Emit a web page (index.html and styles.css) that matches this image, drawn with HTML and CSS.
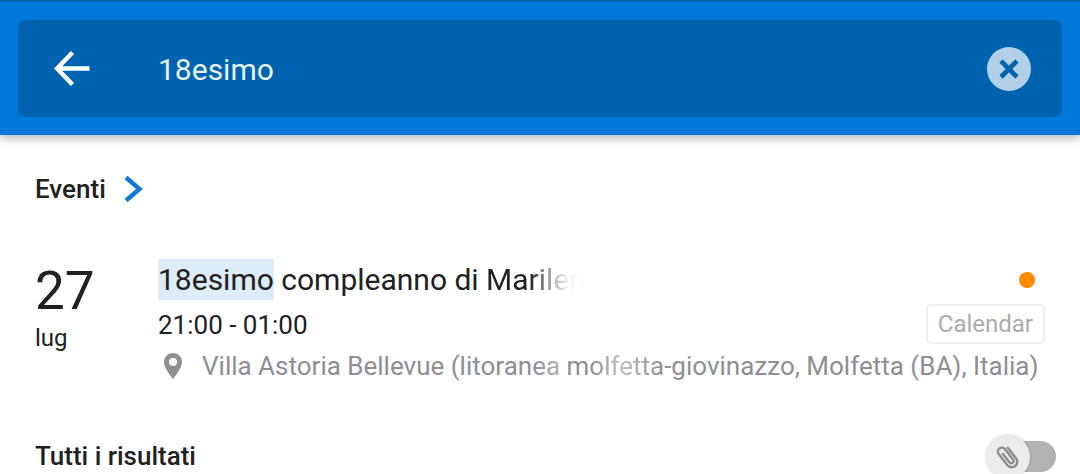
FILE: index.html
```html
<!DOCTYPE html>
<html lang="it">
<head>
<meta charset="utf-8">
<meta name="viewport" content="width=device-width, initial-scale=1">
<title>18esimo</title>
<link rel="stylesheet" href="styles.css">
</head>
<body>
<header class="app-bar">
  <form class="search" role="search">
    <button class="icon-button" type="button" aria-label="Indietro">
      <svg width="36" height="36" viewBox="0 0 36 36" fill="none" stroke="#fff" stroke-width="4.400"><path d="M35.500 17.500H4M18.500 1.500L3 17.500l15.500 16"/></svg>
    </button>
    <input class="search-input" type="text" value="18esimo" aria-label="Cerca">
    <button class="icon-button" type="button" aria-label="Cancella">
      <svg width="44" height="44" viewBox="0 0 44 44"><circle cx="22" cy="22" r="22" fill="#b2d0e8"/><path d="M14 14l16 16M30 14L14 30" stroke="#0063af" stroke-width="4.600"/></svg>
    </button>
  </form>
</header>
<main class="results">
  <h2 class="heading"><a class="heading-link" href="#eventi">Eventi
    <svg width="20" height="28" viewBox="0 0 20 28" fill="none" stroke="#0f78d4" stroke-width="4.400"><path d="M2 2.500L15.500 14 2 25.500"/></svg></a>
  </h2>
  <article class="event" id="eventi">
    <div class="date"><span class="day">27</span><span class="month">lug</span></div>
    <div class="details">
      <div class="row">
        <h3 class="title"><mark class="match">18esimo</mark> compleanno di <span class="name">Marilena</span></h3>
        <span class="dot"></span>
      </div>
      <div class="row">
        <span class="time">21:00 - 01:00</span>
        <span class="tag">Calendar</span>
      </div>
      <div class="place">
        <svg width="20" height="28" viewBox="0 0 20 28"><path fill="#8e8e93" fill-rule="evenodd" d="M10 1C4.800 1 1 5 1 10c0 6.500 9 17 9 17s9-10.500 9-17c0-5-3.800-9-9-9zm0 5a4 4 0 1 1 0 8 4 4 0 0 1 0-8z"/></svg>
        <span class="address">Villa Astoria Bellevue (litoran<span class="faded">ea molfetta</span>-giovinazzo, Molfetta (BA), Italia)</span>
      </div>
    </div>
  </article>
  <div class="all">
    <h2 class="heading">Tutti i risultati</h2>
    <label class="switch">
      <input class="switch-input" type="checkbox" aria-label="Solo con allegati">
      <span class="thumb">
        <svg width="28" height="28" viewBox="0 0 28 28" fill="none" stroke="#8c8c8c" stroke-width="2.400" stroke-linecap="round" stroke-linejoin="round"><g transform="rotate(-38 14 14)"><path d="M19.500 6.500V20a5.500 5.500 0 0 1-11 0V6a4 4 0 0 1 8 0v13a2.300 2.300 0 0 1-4.600 0V8.500"/></g></svg>
      </span>
    </label>
  </div>
</main>
</body>
</html>
```
FILE: styles.css
```css
* { box-sizing: border-box; }

body {
  margin: 0;
  height: 100vh;
  overflow: hidden;
  background: #fff;
  color: #212121;
  font-family: Roboto, sans-serif;
}

h2, h3 { margin: 0; }

.app-bar {
  padding: 18px;
  border-top: 2px solid #0063af;
  background: #0078d9;
  box-shadow: 0 4px 8px rgba(0, 0, 0, 0.25);
}

.search {
  display: flex;
  align-items: center;
  height: 97px;
  padding: 0 31px 0 36px;
  border-radius: 8px;
  background: #0063af;
}

.icon-button {
  display: flex;
  padding: 0;
  border: 0;
  background: none;
}

.search-input {
  flex: 1;
  min-width: 0;
  margin-left: 68px;
  padding: 2px 0 0;
  border: 0;
  outline: 0;
  background: none;
  color: #e6f2fb;
  font: 30px/40px Roboto, sans-serif;
}

.results { padding: 36px 24px 0 35px; }

.heading {
  font-size: 26px;
  line-height: 36px;
  font-weight: 500;
}

.heading-link {
  display: flex;
  align-items: center;
  gap: 18px;
  color: inherit;
  text-decoration: none;
}

.event {
  display: flex;
  margin-top: 52px;
}

.date {
  display: flex;
  flex-direction: column;
  flex: 0 0 123px;
}

.day {
  font-size: 53px;
  line-height: 64px;
}

.month {
  font-size: 24px;
  line-height: 30px;
}

.details {
  flex: 1;
  min-width: 0;
}

.row {
  display: flex;
  align-items: center;
  justify-content: space-between;
  padding-right: 11px;
}

.title {
  font-size: 30px;
  line-height: 41px;
  font-weight: 400;
  white-space: nowrap;
}

.match {
  display: inline-block;
  background: #deebf8;
  color: inherit;
}

.name {
  -webkit-mask-image: linear-gradient(90deg, #000 44px, rgba(0, 0, 0, 0.5) 60px, rgba(0, 0, 0, 0.06) 82px, transparent 100px);
  mask-image: linear-gradient(90deg, #000 44px, rgba(0, 0, 0, 0.5) 60px, rgba(0, 0, 0, 0.06) 82px, transparent 100px);
}

.dot {
  width: 16px;
  height: 16px;
  margin-right: 10px;
  border-radius: 50%;
  background: #ff8c00;
}

.time {
  padding-top: 6px;
  font-size: 26px;
  line-height: 38px;
}

.tag {
  margin-top: 4px;
  padding: 0 10px;
  border: 2px solid #efefef;
  border-radius: 5px;
  color: #acacac;
  font-size: 24px;
  line-height: 36px;
}

.place {
  display: flex;
  align-items: center;
  gap: 19px;
  margin-top: 2px;
  padding-left: 5px;
  color: #8e8e93;
  font-size: 26px;
  line-height: 40px;
  white-space: nowrap;
}

.faded {
  -webkit-mask-image: linear-gradient(90deg, #000, rgba(0, 0, 0, 0.7) 28px, #000 38px, #000 60px, rgba(0, 0, 0, 0.55) 88px, #000);
  mask-image: linear-gradient(90deg, #000, rgba(0, 0, 0, 0.7) 28px, #000 38px, #000 60px, rgba(0, 0, 0, 0.55) 88px, #000);
}

.all {
  display: flex;
  align-items: center;
  justify-content: space-between;
  margin-top: 52px;
}

.switch {
  display: flex;
  position: relative;
}

.switch-input {
  appearance: none;
  width: 62px;
  height: 31px;
  margin: 0;
  border-radius: 16px;
  background: #b2b2b2;
}

.thumb {
  display: flex;
  align-items: center;
  justify-content: center;
  position: absolute;
  top: -6px;
  left: -8px;
  width: 44px;
  height: 44px;
  border-radius: 50%;
  background: #ececec;
  box-shadow: 0 0 3px rgba(0, 0, 0, 0.2);
}
```
